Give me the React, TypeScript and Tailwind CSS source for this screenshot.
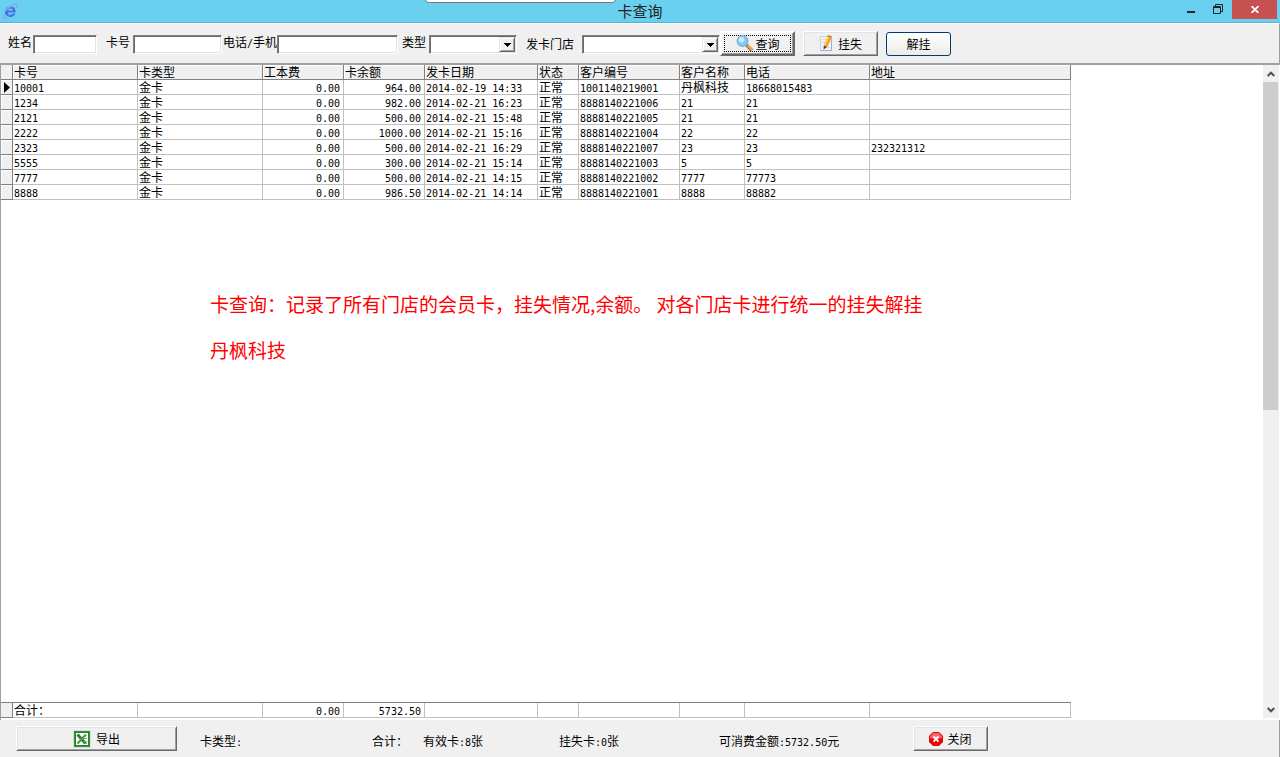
import { useState } from "react";
import type { ReactNode } from "react";

type Card = {
  no: string;
  type: string;
  fee: string;
  balance: string;
  date: string;
  status: string;
  customerNo: string;
  customer: string;
  phone: string;
  address: string;
};

const columns: { key: keyof Card; title: string; width: string; right?: boolean }[] = [
  { key: "no", title: "卡号", width: "w-[125px]" },
  { key: "type", title: "卡类型", width: "w-[125px]" },
  { key: "fee", title: "工本费", width: "w-[81px]", right: true },
  { key: "balance", title: "卡余额", width: "w-[81px]", right: true },
  { key: "date", title: "发卡日期", width: "w-[113px]" },
  { key: "status", title: "状态", width: "w-[41px]" },
  { key: "customerNo", title: "客户编号", width: "w-[101px]" },
  { key: "customer", title: "客户名称", width: "w-[65px]" },
  { key: "phone", title: "电话", width: "w-[125px]" },
  { key: "address", title: "地址", width: "w-[201px]" },
];

const rows: [string, string, string, string, string, string, string][] = [
  ["10001", "964.00", "2014-02-19 14:33", "1001140219001", "丹枫科技", "18668015483", ""],
  ["1234", "982.00", "2014-02-21 16:23", "8888140221006", "21", "21", ""],
  ["2121", "500.00", "2014-02-21 15:48", "8888140221005", "21", "21", ""],
  ["2222", "1000.00", "2014-02-21 15:16", "8888140221004", "22", "22", ""],
  ["2323", "500.00", "2014-02-21 16:29", "8888140221007", "23", "23", "232321312"],
  ["5555", "300.00", "2014-02-21 15:14", "8888140221003", "5", "5", ""],
  ["7777", "500.00", "2014-02-21 14:15", "8888140221002", "7777", "77773", ""],
  ["8888", "986.50", "2014-02-21 14:14", "8888140221001", "8888", "88882", ""],
];

const cards: Card[] = rows.map(
  ([no, balance, date, customerNo, customer, phone, address]) => ({
    no,
    type: "金卡",
    fee: "0.00",
    balance,
    date,
    status: "正常",
    customerNo,
    customer,
    phone,
    address,
  }),
);

// Latin runs are half the width of a Chinese character
function Txt({ children }: { children: string }) {
  return (
    <>
      {children.split(/([\x20-\x7e]+)/).map((part, i) =>
        i % 2 ? (
          <span
            key={i}
            className="font-['DejaVu_Sans_Mono','Liberation_Mono',monospace] text-[10px] leading-none"
          >
            {part}
          </span>
        ) : (
          part
        ),
      )}
    </>
  );
}

function BrowserLogo() {
  return (
    <svg width="16" height="16" viewBox="0 0 16 16" fill="none">
      <path
        d="M13.600 9.400H5.800c.1 1.400 1.100 2.300 2.700 2.300 1.100 0 1.900-.4 2.300-1.100h2.600c-.8 2.200-2.600 3.400-5 3.400-3.300 0-5.500-2.200-5.500-5.300 0-3.200 2.300-5.500 5.600-5.500 3.400 0 5.400 2.500 5.100 6.200ZM5.900 7.500h5.100c-.2-1.300-1.100-2-2.500-2s-2.400.8-2.600 2Z"
        fill="#3f74e4"
      />
      <path
        d="M2.800 10.500C.6 13.600.6 15.700 2.600 15.200c1.300-.3 2.700-1.300 4-2.400M9.600 3C12.200 1 14.600.2 15.100 1.300c.4.900-.1 2.300-1.100 3.900M2.900 8.500C4.300 6 7 3.900 9.600 3"
        stroke="#8fa6ee"
        strokeWidth="1.500"
      />
    </svg>
  );
}

function SearchIcon() {
  return (
    <svg width="18" height="17" viewBox="0 0 18 17" fill="none">
      <path d="m10.500 10 5.500 5.500" stroke="#8a6a38" strokeWidth="3.200" />
      <path d="m11.500 10.500 4.500 4.500" stroke="#f0b050" strokeWidth="1.800" />
      <circle cx="6.500" cy="6" r="5.300" fill="#7ccdf5" stroke="#86abd8" strokeWidth="1.300" />
      <circle cx="5.500" cy="4.800" r="2.800" fill="#c4edff" />
    </svg>
  );
}

function EditIcon() {
  return (
    <svg width="14" height="17" viewBox="0 0 14 17">
      <path d="M1.500 1.500h11v14h-11z" fill="#eef3fb" stroke="#c6cfdd" />
      <path d="M12.500 4v12M2 15.500h11" stroke="#9fb0c9" />
      <path d="M3 4.500h4M3 7.500h3M8 12.500h3" stroke="#d3dbe8" />
      <path d="m8.500 1.500 4 1.500-4.300 9-3.400-1.500z" fill="#f7941d" />
      <path d="m8.500 1.500 2 .7-4 9-1.700-.7z" fill="#ffd23c" />
      <path d="M4.800 10.500 8.200 12l-3.700 2.500z" fill="#58391c" />
      <path d="m8.500 1.500.6-1.500 4 1.500-.6 1.500z" fill="#e4702a" />
    </svg>
  );
}

function ExcelIcon() {
  return (
    <svg width="18" height="18" viewBox="0 0 18 18">
      <path d="M0 0h18v18H0z" fill="#dcdcdc" />
      <path d="M1 1h16v16H1z" fill="#168a1c" />
      <path d="M1.500 1.500h15v15h-15z" fill="none" stroke="#63965f" strokeDasharray="1 1" />
      <path d="M3 3h12v12H3z" fill="#fff" />
      <path d="m4.500 4.500 8 9" stroke="#2f7d35" strokeWidth="3" />
      <path d="m13 4.500-8.500 9" stroke="#4f9653" strokeWidth="2.200" />
      <path d="M11 8.500h3M11 11.500h3M12 13.500h2" stroke="#7ab57b" />
    </svg>
  );
}

function StopIcon() {
  return (
    <svg width="14" height="14" viewBox="0 0 14 14">
      <path d="M4 0h6l4 4v6l-4 4H4l-4-4V4z" fill="#e80808" />
      <path d="M4.400 1h5.200L13 4.400V6C10 7 4 7 1 6V4.400z" fill="#f36a6a" />
      <path d="m4.500 4.500 5 5M9.500 4.500l-5 5" stroke="#fff" strokeWidth="1.800" />
    </svg>
  );
}

function TitleBar() {
  return (
    <header className="grid h-[23px] shrink-0 grid-cols-[1fr_auto_1fr] border-b border-[#56b4cf] bg-[#69d1ef]">
      <div className="pt-[3px] pl-[2px]">
        <BrowserLogo />
      </div>
      <h1 className="text-[15px] leading-[22px] text-[#222]">卡查询</h1>
      <div className="flex justify-end pr-[3px]">
        <button type="button" aria-label="最小化" className="flex w-[26px] justify-center pt-[11px]">
          <span className="h-[2px] w-2 bg-[#222]" />
        </button>
        <button type="button" aria-label="还原" className="flex h-[18px] w-7 justify-center pt-1">
          <svg width="10" height="10" viewBox="0 0 10 10" fill="none" stroke="#222">
            <path d="M.5 2.500h7v7h-7zM0 3.500h8M2.500 2V.5h7v7H8" />
          </svg>
        </button>
        <button
          type="button"
          aria-label="关闭窗口"
          className="flex h-[19px] w-[45px] items-center justify-center bg-[#c75050]"
        >
          <svg width="8" height="7" viewBox="0 0 8 7" stroke="#fff" strokeWidth="1.800">
            <path d="m.5 0 7 7M7.500 0l-7 7" />
          </svg>
        </button>
      </div>
    </header>
  );
}

const sunken =
  "h-[19px] border border-t-[#808080] border-l-[#808080] border-r-white border-b-white bg-white shadow-[inset_1px_1px_0_#696969,inset_-1px_-1px_0_#e3e3e3] outline-none";

function Field({ id, label, width }: { id: string; label: string; width: string }) {
  return (
    <div className="flex items-center">
      <label htmlFor={id} className="pr-px pb-[5px]">
        <Txt>{label}</Txt>
      </label>
      <input id={id} className={`${sunken} px-1 ${width}`} />
    </div>
  );
}

function Combo({ id, width }: { id: string; width: string }) {
  return (
    <div className={`relative ${width}`}>
      <select id={id} className={`${sunken} block w-full appearance-none px-1`}>
        <option value="" />
      </select>
      <span className="pointer-events-none absolute top-[2px] right-[2px] flex h-[15px] w-4 items-center justify-center border border-t-[#e3e3e3] border-l-[#e3e3e3] border-r-[#696969] border-b-[#696969] bg-[#f0f0f0] shadow-[inset_1px_1px_0_#fff,inset_-1px_-1px_0_#a0a0a0]">
        <svg width="7" height="4" viewBox="0 0 7 4" shapeRendering="crispEdges">
          <path d="M0 0h7v1H0zM1 1h5v1H1zM2 2h3v1H2zM3 3h1v1H3z" />
        </svg>
      </span>
    </div>
  );
}

function RaisedButton({
  children,
  className,
  focused,
}: {
  children: ReactNode;
  className: string;
  focused?: boolean;
}) {
  return (
    <button
      type="button"
      className={`flex h-[25px] p-[2px] ${
        focused
          ? "border-2 border-t-white border-l-white border-r-[#696969] border-b-[#696969] shadow-[inset_-1px_-1px_0_#a0a0a0]"
          : "border border-t-white border-l-white border-r-[#696969] border-b-[#696969] shadow-[inset_1px_1px_0_#e3e3e3,inset_-1px_-1px_0_#a0a0a0]"
      } bg-[#f0f0f0] ${className}`}
    >
      <span
        className={`flex h-full w-full items-center justify-center border ${
          focused ? "border-dotted border-black" : "border-transparent"
        }`}
      >
        {children}
      </span>
    </button>
  );
}

function Toolbar() {
  return (
    <form className="flex h-10 shrink-0 items-center border-t border-r border-t-white border-r-[#a0a0a0] pt-[2px] pl-2">
      <Field id="name" label="姓名" width="w-16" />
      <div className="ml-[9px]">
        <Field id="cardNo" label="卡号" width="w-[89px] ml-[2px]" />
      </div>
      <div className="ml-px">
        <Field id="phone" label="电话/手机" width="w-[121px] -ml-px" />
      </div>
      <label htmlFor="cardType" className="mr-[3px] ml-1 pb-[5px]">
        类型
      </label>
      <Combo id="cardType" width="w-[88px]" />
      <label htmlFor="store" className="mr-2 ml-[9px] pb-px">
        发卡门店
      </label>
      <Combo id="store" width="w-[138px]" />
      <RaisedButton focused className="mb-[2px] w-[75px]">
        <SearchIcon />
        <span className="ml-[2px]">查询</span>
      </RaisedButton>
      <RaisedButton className="mb-[2px] ml-2 w-[75px]">
        <EditIcon />
        <span className="ml-[5px]">挂失</span>
      </RaisedButton>
      <button
        type="button"
        className="mb-px ml-2 h-6 w-[65px] rounded-[3px] border border-[#003c74] bg-linear-to-b from-white to-[#ecebe6]"
      >
        解挂
      </button>
    </form>
  );
}

function CardTable({ selected, onSelect }: { selected: number; onSelect: (i: number) => void }) {
  return (
    <table className="w-[1070px] table-fixed border-separate border-spacing-0">
      <thead>
        <tr className="h-[15px] bg-[#f0f0f0] text-left leading-[14px]">
          <th className="w-3 border-r border-b border-[#808080] p-0" />
          {columns.map((col) => (
            <th
              key={col.key}
              className={`${col.width} border-r border-b border-[#808080] p-0 pl-px font-normal whitespace-nowrap shadow-[inset_1px_1px_0_#fff]`}
            >
              {col.title}
            </th>
          ))}
        </tr>
      </thead>
      <tbody>
        {cards.map((card, i) => (
          <tr key={card.no} className="h-[15px] leading-[14px]" onClick={() => onSelect(i)}>
            <td className="border-r border-b border-[#808080] bg-[#f0f0f0] p-0 shadow-[inset_1px_1px_0_#fff]">
              {i === selected && (
                <svg className="ml-[3px] block" width="6" height="11" viewBox="0 0 6 11">
                  <path d="M0 0l6 5.500L0 11z" />
                </svg>
              )}
            </td>
            {columns.map((col) => (
              <td
                key={col.key}
                className={`border-r border-b border-[#c0c0c0] p-0 whitespace-nowrap ${
                  col.right ? "pr-[3px] text-right" : "pl-px"
                }`}
              >
                <Txt>{card[col.key]}</Txt>
              </td>
            ))}
          </tr>
        ))}
      </tbody>
    </table>
  );
}

function TotalsTable() {
  const totals: Partial<Card> = { no: "合计：", fee: "0.00", balance: "5732.50" };
  return (
    <table className="w-[1070px] table-fixed border-separate border-spacing-0 border-t border-[#808080]">
      <tbody>
        <tr className="h-[15px] leading-[14px]">
          <td className="w-3 border-r border-b border-[#808080] bg-[#f0f0f0] p-0" />
          {columns.map((col) => (
            <td
              key={col.key}
              className={`${col.width} border-r border-b border-[#c0c0c0] p-0 whitespace-nowrap ${
                col.right ? "pr-[3px] text-right" : "pl-px"
              }`}
            >
              <Txt>{totals[col.key] ?? ""}</Txt>
            </td>
          ))}
        </tr>
      </tbody>
    </table>
  );
}

function ScrollBar() {
  return (
    <div className="mr-px mb-[2px] flex w-4 shrink-0 flex-col bg-[#f0f0f0]">
      <button type="button" aria-label="向上滚动" className="flex h-[17px] items-center justify-center">
        <svg width="8" height="6" viewBox="0 0 8 6" fill="none" stroke="#505050" strokeWidth="2">
          <path d="m.7 5 3.300-3.300L7.300 5" />
        </svg>
      </button>
      <div className="flex-1">
        <div className="h-[53%] w-[15px] bg-[#cdcdcd]" />
      </div>
      <button type="button" aria-label="向下滚动" className="flex h-[17px] items-center justify-center">
        <svg width="8" height="6" viewBox="0 0 8 6" fill="none" stroke="#505050" strokeWidth="2">
          <path d="m.7 1 3.300 3.300L7.300 1" />
        </svg>
      </button>
    </div>
  );
}

function StatusBar() {
  return (
    <footer className="flex h-[37px] shrink-0 items-center border-r border-[#a0a0a0] pl-4">
      <RaisedButton className="w-[161px]">
        <ExcelIcon />
        <span className="ml-[5px]">导出</span>
      </RaisedButton>
      <div className="flex pt-[5px]">
        <span className="ml-[23px] w-[172px]">
          <Txt>卡类型:</Txt>
        </span>
        <span className="w-[51px]">合计：</span>
        <span className="w-[136px]">
          <Txt>有效卡:8张</Txt>
        </span>
        <span className="w-40">
          <Txt>挂失卡:0张</Txt>
        </span>
        <span className="w-[194px]">
          <Txt>可消费金额:5732.50元</Txt>
        </span>
      </div>
      <RaisedButton className="w-[75px]">
        <StopIcon />
        <span className="ml-1">关闭</span>
      </RaisedButton>
    </footer>
  );
}

export default function App() {
  const [selected, setSelected] = useState(0);

  return (
    <div className="relative flex h-screen flex-col overflow-hidden bg-[#f0f0f0] font-['Noto_Sans_CJK_SC',sans-serif] text-xs whitespace-nowrap text-black">
      <div className="absolute -top-2 left-[424px] h-[11px] w-[193px] rounded-md border border-[#777] bg-white" />
      <TitleBar />
      <Toolbar />
      <main className="flex min-h-0 flex-1 border-t-2 border-l border-[#a0a0a0] bg-white">
        <div className="flex flex-1 flex-col pb-[2px]">
          <CardTable selected={selected} onSelect={setSelected} />
          <div className="mt-[81px] flex-1 pl-[209px] text-[19px] leading-[46px] text-[#f00]">
            <p>卡查询：记录了所有门店的会员卡，挂失情况,余额。 对各门店卡进行统一的挂失解挂</p>
            <p>丹枫科技</p>
          </div>
          <TotalsTable />
        </div>
        <ScrollBar />
      </main>
      <StatusBar />
    </div>
  );
}
